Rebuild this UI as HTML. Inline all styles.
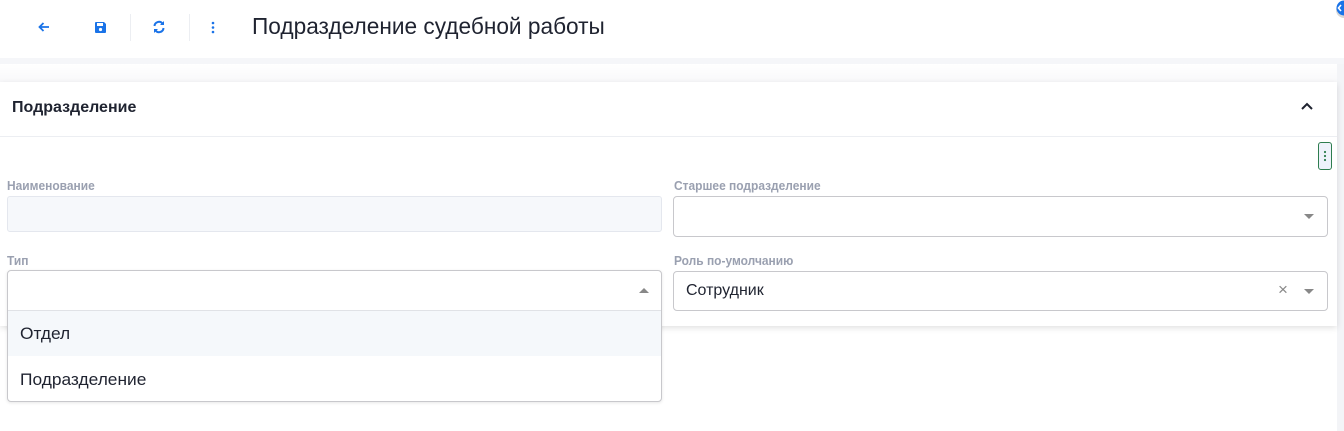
<!DOCTYPE html>
<html><head><meta charset="utf-8"><style>
body{margin:0;width:1344px;height:431px;background:#fff;font-family:"Liberation Sans",sans-serif;position:relative;overflow:hidden}
.abs{position:absolute}
.lbl{font-size:13px;font-weight:bold;color:#9aa0b0;transform:scaleX(.92);transform-origin:left}
.box{border:1px solid #c8c8cc;border-radius:4px;background:#fff;box-sizing:border-box}
.arrow{width:0;height:0;border-left:5px solid transparent;border-right:5px solid transparent}
</style></head><body>
<div class="abs" style="left:0;top:58px;width:1344px;height:6px;background:#f5f6f9"></div>
<div class="abs" style="left:0;top:64px;width:1337px;height:18px;background:linear-gradient(#fff,#f8f8fa)"></div>
<div class="abs" style="left:1337px;top:64px;width:7px;height:367px;background:#f3f4f7"></div>
<svg class="abs" style="left:37px;top:20px" width="14" height="14" viewBox="0 0 14 14"><path d="M12 7H2.5M6.5 3L2.5 7l4 4" stroke="#1a73e8" stroke-width="1.8" fill="none"/></svg>
<svg class="abs" style="left:94px;top:21px" width="13" height="13" viewBox="0 0 13 13"><path d="M1 2a1 1 0 0 1 1-1h8l2 2v8a1 1 0 0 1-1 1H2a1 1 0 0 1-1-1z" fill="#1a73e8"/><rect x="3" y="2" width="6" height="3" fill="#fff"/><circle cx="6.5" cy="8.5" r="1.6" fill="#fff"/></svg>
<div class="abs" style="left:130px;top:14px;width:1px;height:27px;background:#eceef2"></div>
<svg class="abs" style="left:152px;top:20px" width="14" height="14" viewBox="0 0 14 14"><path d="M2.5 6a4.5 4.5 0 0 1 8-2.5M11.5 8a4.5 4.5 0 0 1-8 2.5" stroke="#1a73e8" stroke-width="2" fill="none"/><path d="M12 1v4H8zM2 13V9h4z" fill="#1a73e8"/></svg>
<div class="abs" style="left:189px;top:14px;width:1px;height:27px;background:#eceef2"></div>
<svg class="abs" style="left:211px;top:21px" width="4" height="13"><circle cx="2" cy="2" r="1.3" fill="#1a73e8"/><circle cx="2" cy="6.5" r="1.3" fill="#1a73e8"/><circle cx="2" cy="11" r="1.3" fill="#1a73e8"/></svg>
<div class="abs" style="left:252px;top:13px;font-size:23px;color:#1f2330;transform:scaleX(.985);transform-origin:left">Подразделение судебной работы</div>
<svg class="abs" style="left:1329px;top:0" width="15" height="22"><circle cx="15" cy="10" r="8" fill="#999" opacity=".4"/><circle cx="15" cy="8" r="7.5" fill="#1a73e8"/><path d="M12 5l-2.5 3 2.5 3" stroke="#fff" stroke-width="1.6" fill="none"/></svg>
<div class="abs" style="left:0;top:82px;width:1337px;height:244px;background:#fff;box-shadow:0 2px 6px rgba(0,0,0,.12)"></div>
<div class="abs" style="left:12px;top:99px;font-size:16px;font-weight:bold;color:#1f2330">Подразделение</div>
<svg class="abs" style="left:1301px;top:102px" width="12" height="8"><path d="M1 7l5-5 5 5" stroke="#1f2330" stroke-width="2" fill="none"/></svg>
<div class="abs" style="left:0;top:136px;width:1337px;height:1px;background:#eceef2"></div>
<div class="abs" style="left:1318px;top:142px;width:14px;height:28px;border:1px solid #2e7d4f;border-radius:3px;background:#eef2fb;box-sizing:border-box"></div>
<svg class="abs" style="left:1323px;top:150px" width="4" height="12"><circle cx="2" cy="2" r="1.1" fill="#2e7d4f"/><circle cx="2" cy="6" r="1.1" fill="#2e7d4f"/><circle cx="2" cy="10" r="1.1" fill="#2e7d4f"/></svg>
<div class="abs lbl" style="left:7px;top:178px">Наименование</div>
<div class="abs" style="left:7px;top:196px;width:655px;height:36px;background:#f6f8fb;border:1px solid #e4e7ee;border-radius:3px;box-sizing:border-box"></div>
<div class="abs lbl" style="left:674px;top:178px">Старшее подразделение</div>
<div class="abs box" style="left:673px;top:196px;width:655px;height:41px"></div>
<div class="abs arrow" style="left:1304px;top:214px;border-top:5px solid #888"></div>
<div class="abs lbl" style="left:7px;top:253px">Тип</div>
<div class="abs lbl" style="left:674px;top:253px">Роль по-умолчанию</div>
<div class="abs box" style="left:673px;top:271px;width:655px;height:40px"></div>
<div class="abs" style="left:686px;top:282px;font-size:16px;color:#1f2330">Сотрудник</div>
<div class="abs" style="left:1278px;top:280px;font-size:17px;color:#888">×</div>
<div class="abs arrow" style="left:1304px;top:289px;border-top:5px solid #888"></div>
<div class="abs box" style="left:7px;top:270px;width:655px;height:132px;box-shadow:0 1px 3px rgba(0,0,0,.1)"></div>
<div class="abs" style="left:8px;top:310px;width:653px;height:1px;background:#e0e2e6"></div>
<div class="abs arrow" style="left:639px;top:288px;border-bottom:5px solid #888"></div>
<div class="abs" style="left:8px;top:311px;width:653px;height:45px;background:#f5f8fb"></div>
<div class="abs" style="left:20px;top:324px;font-size:17px;color:#1f2330;transform:scaleX(1.02);transform-origin:left">Отдел</div>
<div class="abs" style="left:20px;top:370px;font-size:17px;color:#1f2330;transform:scaleX(1.02);transform-origin:left">Подразделение</div>
</body></html>
